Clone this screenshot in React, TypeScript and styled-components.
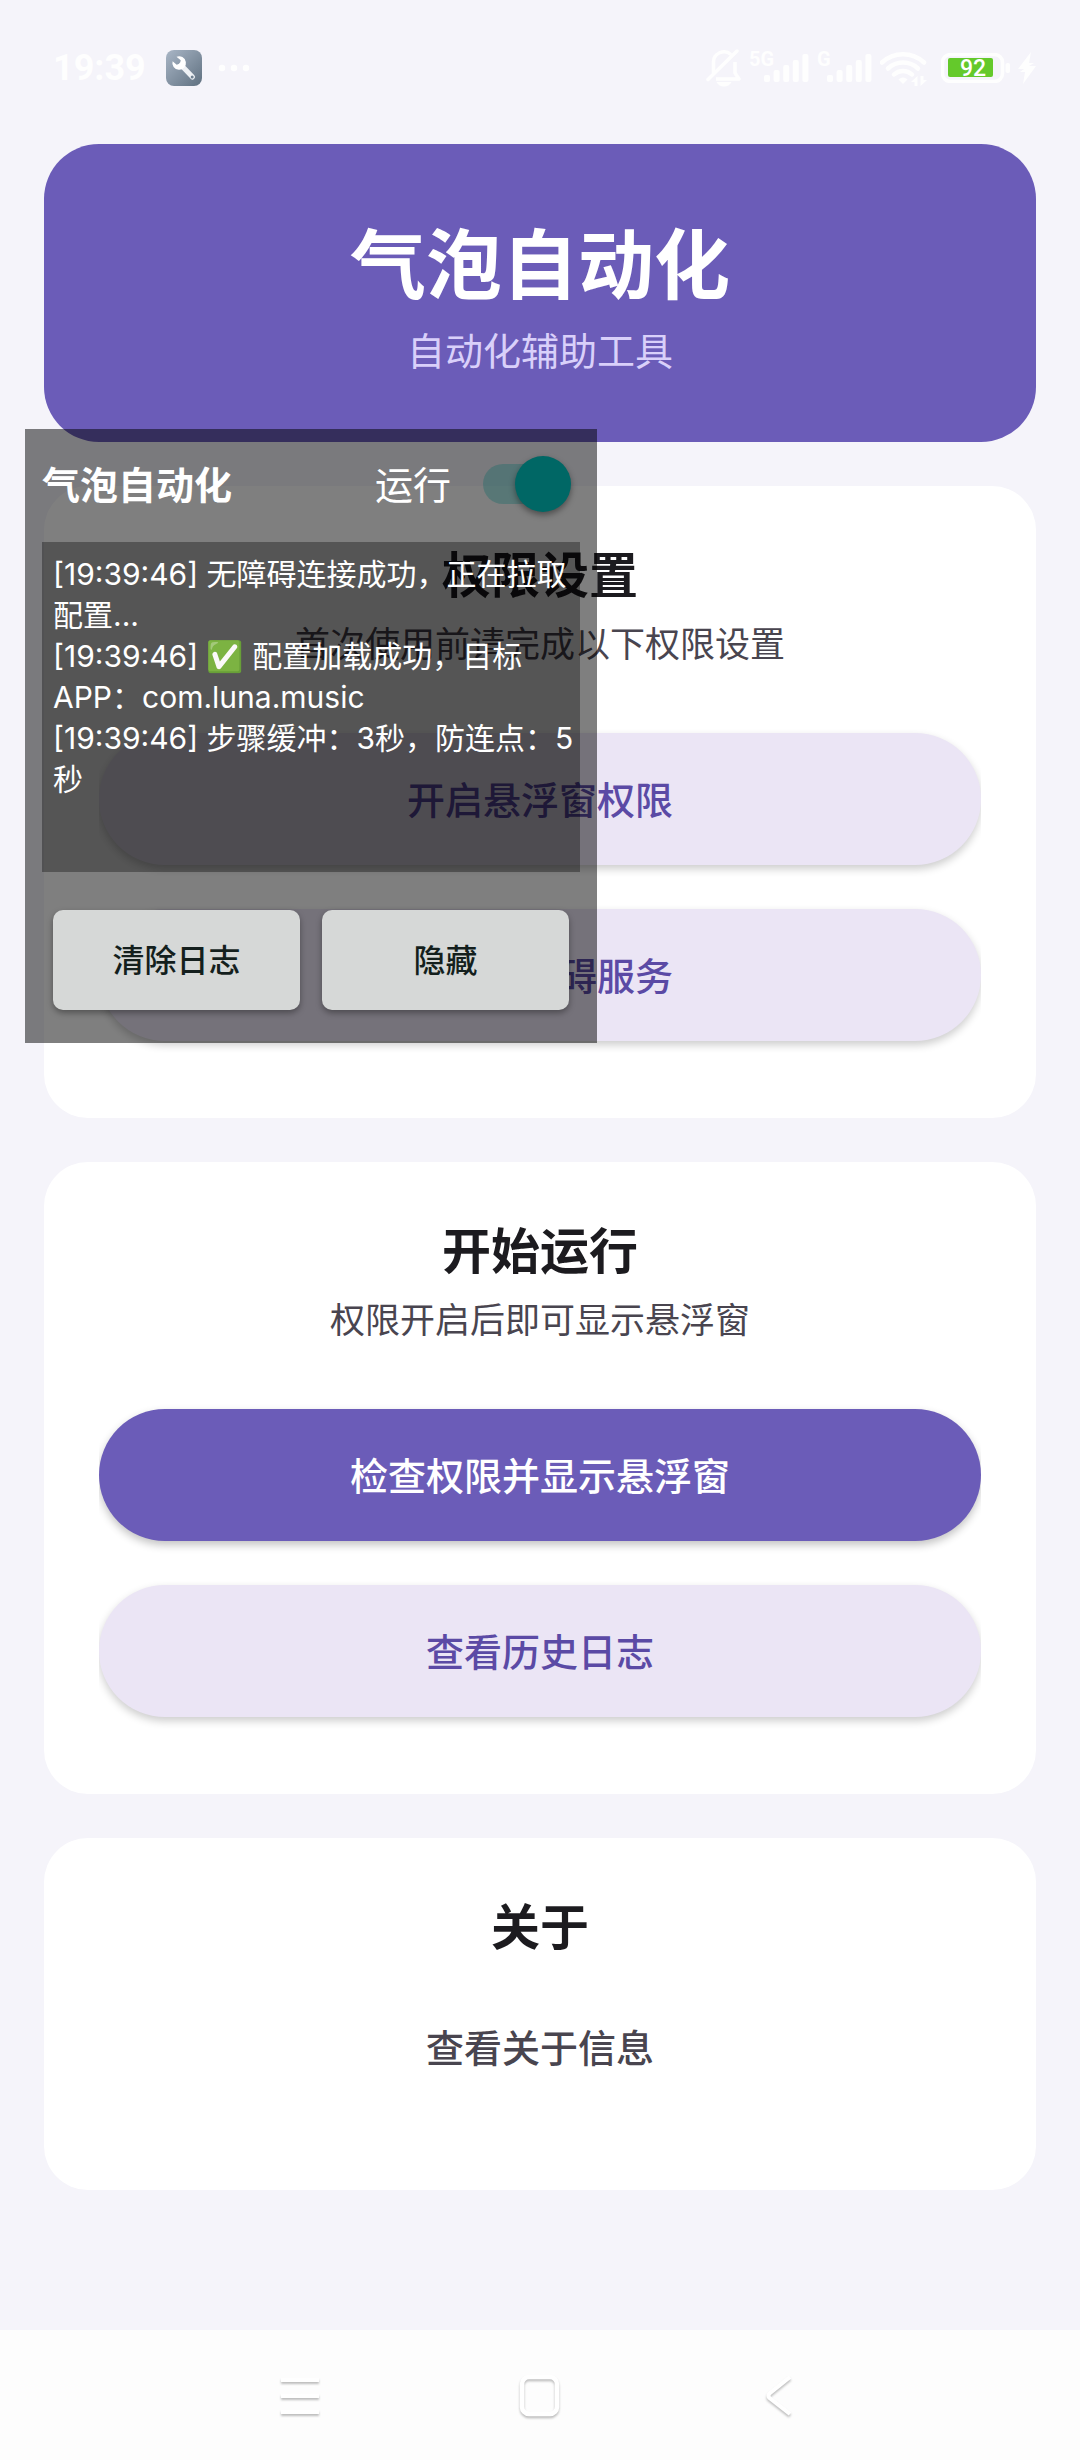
import React, { useState } from "react";
import styled, { createGlobalStyle } from "styled-components";

const GlobalStyle = createGlobalStyle`
  * {
    box-sizing: border-box;
  }
  body {
    margin: 0;
    background: #f5f4fa;
    font-family: Inter, "Noto Sans CJK SC", "Noto Color Emoji", sans-serif;
  }
  button {
    font-family: inherit;
    cursor: pointer;
  }
`;

const Page = styled.div`
  position: relative;
  display: flex;
  flex-direction: column;
  min-height: 100vh;
`;

const StatusBar = styled.header`
  display: flex;
  align-items: center;
  justify-content: space-between;
  height: 136px;
  padding: 0 44px 0 53px;
  color: #fefefe;
`;

const StatusGroup = styled.div<{ $gap: number }>`
  display: flex;
  align-items: center;
  gap: ${({ $gap }) => $gap}px;
`;

const Clock = styled.time`
  font-family: Roboto, sans-serif;
  font-size: 36px;
  font-weight: 700;
  line-height: 40px;
`;

const Content = styled.main`
  display: flex;
  flex-direction: column;
  gap: 44px;
  padding: 8px 44px 44px;
`;

const Hero = styled.section`
  display: flex;
  flex-direction: column;
  align-items: center;
  padding: 69px 44px 64px;
  border-radius: 55px;
  background: #6b5cb8;
`;

const HeroTitle = styled.h1`
  margin: 0;
  color: #ffffff;
  font-size: 76px;
  font-weight: 700;
  line-height: 104px;
`;

const HeroSubtitle = styled.p`
  margin: 8px 0 0;
  color: #d9d0fa;
  font-size: 38px;
  line-height: 53px;
`;

const Card = styled.section`
  display: flex;
  flex-direction: column;
  align-items: stretch;
  padding: 57px 55px 77px;
  border-radius: 44px;
  background: #ffffff;
  text-align: center;
`;

const CardTitle = styled.h2`
  margin: 0;
  color: #1c1b1f;
  font-size: 49px;
  font-weight: 700;
  line-height: 66px;
`;

const CardText = styled.p`
  margin: 11px 0 44px;
  color: #49454f;
  font-size: 35px;
  line-height: 49px;
`;

/* shadows stop at the left and right edges of the list */
const Actions = styled.div`
  display: flex;
  flex-direction: column;
  gap: 44px;
  margin-top: 20px;
  clip-path: inset(-22px 0);
`;

const variants = {
  primary: { background: "#6b5cb8", color: "#ffffff", shadow: "0 4px 8px rgba(0, 0, 0, 0.24)" },
  tonal: { background: "#ebe5f5", color: "#5b4aa5", shadow: "0 4px 8px rgba(0, 0, 0, 0.2)" },
  text: { background: "transparent", color: "#49454f", shadow: "none" },
};

const ActionButton = styled.button<{ $variant: keyof typeof variants }>`
  height: 132px;
  padding: 0 44px 4px;
  border: 0;
  border-radius: 66px;
  background: ${({ $variant }) => variants[$variant].background};
  box-shadow: ${({ $variant }) => variants[$variant].shadow};
  color: ${({ $variant }) => variants[$variant].color};
  font-size: 38px;
  font-weight: 500;
`;

const FloatingPanel = styled.aside`
  position: absolute;
  top: 429px;
  left: 25px;
  width: 572px;
  padding: 16px 17px 33px;
  background: rgba(0, 0, 0, 0.5);
`;

const PanelHeader = styled.div`
  display: flex;
  align-items: center;
  justify-content: space-between;
  height: 78px;
  padding-right: 9px;
  color: #ffffff;
  font-size: 38px;
`;

const PanelText = styled.span<{ $bold?: boolean }>`
  padding-bottom: 4px;
  font-weight: ${({ $bold }) => ($bold ? 700 : 400)};
`;

const SwitchLabel = styled.label`
  display: flex;
  align-items: center;
  gap: 32px;
`;

const Switch = styled.input`
  appearance: none;
  position: relative;
  width: 88px;
  height: 56px;
  margin: 0;

  &::before {
    content: "";
    position: absolute;
    inset: 8px 6px 8px 0;
    border-radius: 20px;
    background: rgba(0, 103, 101, 0.3);
  }

  &::after {
    content: "";
    position: absolute;
    top: 0;
    left: 0;
    width: 56px;
    height: 56px;
    border-radius: 50%;
    background: #d6d8d7;
    box-shadow: 0 3px 6px rgba(0, 0, 0, 0.4);
  }

  &:checked::after {
    left: 32px;
    background: #006765;
  }
`;

const Log = styled.div`
  height: 330px;
  margin-top: 19px;
  padding: 12px 0 12px 11px;
  overflow: hidden;
  background: rgba(0, 0, 0, 0.33);
  color: #ffffff;
  font-size: 30px;
  line-height: 41px;
`;

const LogLine = styled.p`
  margin: 0;
`;

const PanelActions = styled.div`
  display: grid;
  grid-template-columns: 1fr 1fr;
  gap: 22px;
  margin: 38px 11px 0;
`;

const PanelButton = styled.button`
  height: 100px;
  padding: 0 16px 4px;
  border: 0;
  border-radius: 10px;
  background: #d6d8d7;
  box-shadow: 0 3px 6px rgba(0, 0, 0, 0.35);
  color: #141f1d;
  font-size: 32px;
  font-weight: 500;
`;

const NavBar = styled.nav`
  display: grid;
  grid-template-columns: repeat(3, 1fr);
  height: 130px;
  margin-top: auto;
  padding: 0 16.6667%;
  background: #fdfdfd;
`;

const NavButton = styled.button`
  display: flex;
  align-items: center;
  justify-content: center;
  padding: 0;
  border: 0;
  background: none;

  svg {
    overflow: visible;
    filter: drop-shadow(0 2px 1px rgba(0, 0, 0, 0.25));
  }
`;

const ToolIcon = () => (
  <svg width="36" height="36" viewBox="0 0 36 36">
    <defs>
      <linearGradient id="tool" x1="0" y1="0" x2="1" y2="1">
        <stop offset="0" stopColor="#a9b6c6" />
        <stop offset="1" stopColor="#5f7080" />
      </linearGradient>
    </defs>
    <rect width="36" height="36" rx="8" fill="url(#tool)" />
    <path d="M15 15L26.500 27" stroke="#eef1f5" strokeWidth="5" strokeLinecap="round" />
    <path
      d="M10.500 6.800A6.800 6.800 0 1 1 6.600 11.200L10.700 14.800L14 13.500L14.700 10.300Z"
      fill="#ffffff"
    />
    <circle cx="26.200" cy="27" r="1.500" fill="#6f8090" />
  </svg>
);

const MoreDots = () => (
  <svg width="34" height="8" viewBox="0 0 34 8" fill="currentColor">
    <circle cx="5" cy="4" r="3.200" />
    <circle cx="17" cy="4" r="3.200" />
    <circle cx="29" cy="4" r="3.200" />
  </svg>
);

const MutedBell = () => (
  <svg width="36" height="38" viewBox="0 0 36 38" fill="none" stroke="currentColor">
    <path
      d="M7.500 24V13.500A10.500 10.500 0 0 1 25 5.500M29 13V24L33 30H10"
      strokeWidth="3.500"
      strokeLinejoin="round"
    />
    <path d="M2 30.500L31 2" strokeWidth="3.500" strokeLinecap="round" />
    <path d="M10.500 33H25.500Q23 37.500 18 37.500T10.500 33Z" fill="currentColor" stroke="none" />
  </svg>
);

const Signal = ({ label, barsAt }: { label: string; barsAt: number }) => (
  <svg width={barsAt + 46} height="48" viewBox={`0 0 ${barsAt + 46} 48`} fill="currentColor">
    <text x="0" y="22" fontFamily="Roboto, sans-serif" fontSize="20" fontWeight="700">
      {label}
    </text>
    {[7, 12, 17, 22, 28].map((height, i) => (
      <rect key={height} x={barsAt + i * 9.6} y={38 - height} width="6" height={height} rx="2" />
    ))}
  </svg>
);

const Wifi = () => (
  <svg width="54" height="36" viewBox="0 0 54 36" fill="none" stroke="currentColor">
    <path d="M2 12.500A31 31 0 0 1 44 12.500" strokeWidth="4.500" strokeLinecap="round" />
    <path d="M8 18.500A22 22 0 0 1 38 18.500" strokeWidth="4.500" strokeLinecap="round" />
    <path d="M14 24.500A13 13 0 0 1 32 24.500" strokeWidth="4.500" strokeLinecap="round" />
    <path d="M18.500 29.500Q23 25.500 27.500 29.500L23 34Z" fill="currentColor" stroke="none" />
    <path
      d="M37.500 26V36H34.500V32H31ZM40.500 36V26H43.500V30H47Z"
      fill="currentColor"
      stroke="none"
    />
  </svg>
);

const Battery = ({ level }: { level: number }) => (
  <svg width="70" height="30" viewBox="0 0 70 30">
    <rect x="1.500" y="1.500" width="60" height="27" rx="8" fill="none" stroke="currentColor" strokeWidth="3.500" />
    <rect x="64.500" y="10" width="4.500" height="10" rx="2" fill="currentColor" />
    <rect x="7" y="5" width="45" height="19" rx="2" fill="#64c92b" />
    <text x="32" y="23" textAnchor="middle" fontFamily="Roboto, sans-serif" fontSize="23" fontWeight="500" fill="#ffffff">
      {level}
    </text>
  </svg>
);

const Bolt = () => (
  <svg width="18" height="32" viewBox="0 0 18 32" fill="currentColor">
    <path d="M13 0L0 17H6L2 20H7L5 32L18 14H11L16 11H11Z" />
  </svg>
);

const logs = [
  "[19:39:46] 无障碍连接成功，正在拉取配置...",
  "[19:39:46] ✅ 配置加载成功，目标APP：com.luna.music",
  "[19:39:46] 步骤缓冲：3秒，防连点：5秒",
];

const App = () => {
  const [running, setRunning] = useState(true);
  const [lines, setLines] = useState(logs);
  const [visible, setVisible] = useState(true);

  return (
    <>
      <GlobalStyle />
      <Page>
        <StatusBar>
          <StatusGroup $gap={20}>
            <Clock>19:39</Clock>
            <StatusGroup $gap={15}>
              <ToolIcon />
              <MoreDots />
            </StatusGroup>
          </StatusGroup>
          <StatusGroup $gap={7}>
            <MutedBell />
            <Signal label="5G" barsAt={15} />
            <Signal label="G" barsAt={10} />
            <Wifi />
            <Battery level={92} />
            <Bolt />
          </StatusGroup>
        </StatusBar>

        <Content>
          <Hero>
            <HeroTitle>气泡自动化</HeroTitle>
            <HeroSubtitle>自动化辅助工具</HeroSubtitle>
          </Hero>

          <Card>
            <CardTitle>权限设置</CardTitle>
            <CardText>首次使用前请完成以下权限设置</CardText>
            <Actions>
              <ActionButton $variant="tonal" onClick={() => setVisible(true)}>
                开启悬浮窗权限
              </ActionButton>
              <ActionButton $variant="tonal">开启无障碍服务</ActionButton>
            </Actions>
          </Card>

          <Card>
            <CardTitle>开始运行</CardTitle>
            <CardText>权限开启后即可显示悬浮窗</CardText>
            <Actions>
              <ActionButton $variant="primary" onClick={() => setVisible(true)}>
                检查权限并显示悬浮窗
              </ActionButton>
              <ActionButton $variant="tonal">查看历史日志</ActionButton>
            </Actions>
          </Card>

          <Card>
            <CardTitle>关于</CardTitle>
            <Actions>
              <ActionButton $variant="text">查看关于信息</ActionButton>
            </Actions>
          </Card>
        </Content>

        <NavBar>
          <NavButton aria-label="最近任务">
            <svg width="38" height="38" viewBox="0 0 38 38" stroke="#ffffff" strokeWidth="4">
              <path d="M0 4H38M0 20H38M0 36H38" />
            </svg>
          </NavButton>
          <NavButton aria-label="主页">
            <svg width="40" height="40" viewBox="0 0 40 40" fill="none" stroke="#ffffff" strokeWidth="4.500">
              <rect x="2" y="2" width="35" height="37" rx="7" />
            </svg>
          </NavButton>
          <NavButton aria-label="返回">
            <svg width="26" height="38" viewBox="0 0 26 38" fill="none" stroke="#ffffff" strokeWidth="4">
              <path d="M23 1L2.500 17.500Q0.500 20 2.500 22L23 38" strokeLinejoin="round" />
            </svg>
          </NavButton>
        </NavBar>

        {visible && (
          <FloatingPanel>
            <PanelHeader>
              <PanelText $bold>气泡自动化</PanelText>
              <SwitchLabel>
                <PanelText>运行</PanelText>
                <Switch
                  type="checkbox"
                  checked={running}
                  onChange={(e) => setRunning(e.target.checked)}
                />
              </SwitchLabel>
            </PanelHeader>
            <Log>
              {lines.map((line) => (
                <LogLine key={line}>{line}</LogLine>
              ))}
            </Log>
            <PanelActions>
              <PanelButton onClick={() => setLines([])}>清除日志</PanelButton>
              <PanelButton onClick={() => setVisible(false)}>隐藏</PanelButton>
            </PanelActions>
          </FloatingPanel>
        )}
      </Page>
    </>
  );
};

export default App;
